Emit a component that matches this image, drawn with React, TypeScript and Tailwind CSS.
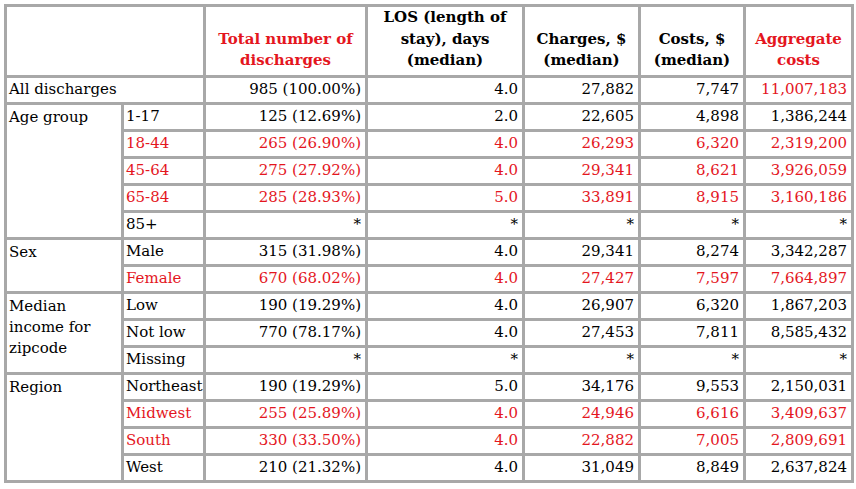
import React from "react";

type Row = { label: string; red: boolean; vals: string[] };

const R = "text-[#e4161e]";

const groups: { name: React.ReactNode; rows: Row[] }[] = [
  {
    name: "Age group",
    rows: [
      { label: "1-17", red: false, vals: ["125 (12.69%)", "2.0", "22,605", "4,898", "1,386,244"] },
      { label: "18-44", red: true, vals: ["265 (26.90%)", "4.0", "26,293", "6,320", "2,319,200"] },
      { label: "45-64", red: true, vals: ["275 (27.92%)", "4.0", "29,341", "8,621", "3,926,059"] },
      { label: "65-84", red: true, vals: ["285 (28.93%)", "5.0", "33,891", "8,915", "3,160,186"] },
      { label: "85+", red: false, vals: ["*", "*", "*", "*", "*"] },
    ],
  },
  {
    name: "Sex",
    rows: [
      { label: "Male", red: false, vals: ["315 (31.98%)", "4.0", "29,341", "8,274", "3,342,287"] },
      { label: "Female", red: true, vals: ["670 (68.02%)", "4.0", "27,427", "7,597", "7,664,897"] },
    ],
  },
  {
    name: (
      <>
        Median
        <br />
        income for
        <br />
        zipcode
      </>
    ),
    rows: [
      { label: "Low", red: false, vals: ["190 (19.29%)", "4.0", "26,907", "6,320", "1,867,203"] },
      { label: "Not low", red: false, vals: ["770 (78.17%)", "4.0", "27,453", "7,811", "8,585,432"] },
      { label: "Missing", red: false, vals: ["*", "*", "*", "*", "*"] },
    ],
  },
  {
    name: "Region",
    rows: [
      { label: "Northeast", red: false, vals: ["190 (19.29%)", "5.0", "34,176", "9,553", "2,150,031"] },
      { label: "Midwest", red: true, vals: ["255 (25.89%)", "4.0", "24,946", "6,616", "3,409,637"] },
      { label: "South", red: true, vals: ["330 (33.50%)", "4.0", "22,882", "7,005", "2,809,691"] },
      { label: "West", red: false, vals: ["210 (21.32%)", "4.0", "31,049", "8,849", "2,637,824"] },
    ],
  },
];

const cell = "border-[3px] border-[#a8a8a8] h-[27px] leading-[21px] py-0 whitespace-nowrap";
const num = `${cell} text-right pr-[4px] pl-[1px]`;
const lab = `${cell} text-left pl-[2px] pr-[1px]`;
const th = "border-[3px] border-[#a8a8a8] align-bottom text-center font-bold leading-[21.5px] pb-[3px] px-[1px] whitespace-nowrap";

export default function App() {
  return (
    <div className="bg-white w-[856px] h-[489px] pt-[4px] pl-[4px]" style={{ fontFamily: '"DejaVu Serif", serif' }}>
      <table className="table-fixed border-collapse text-[15px] text-black w-[847px]">
        <colgroup>
          <col className="w-[117px]" />
          <col className="w-[82px]" />
          <col className="w-[162px]" />
          <col className="w-[157px]" />
          <col className="w-[116px]" />
          <col className="w-[105px]" />
          <col className="w-[108px]" />
        </colgroup>
        <thead>
          <tr className="h-[70px]">
            <th colSpan={2} className={th}></th>
            <th className={`${th} ${R}`}>
              Total number of
              <br />
              discharges
            </th>
            <th className={th}>
              LOS (length of
              <br />
              stay), days
              <br />
              (median)
            </th>
            <th className={th}>
              Charges, $
              <br />
              (median)
            </th>
            <th className={th}>
              Costs, $
              <br />
              (median)
            </th>
            <th className={`${th} ${R}`}>
              Aggregate
              <br />
              costs
            </th>
          </tr>
        </thead>
        <tbody>
          <tr>
            <td colSpan={2} className={lab}>All discharges</td>
            <td className={num}>985 (100.00%)</td>
            <td className={num}>4.0</td>
            <td className={num}>27,882</td>
            <td className={num}>7,747</td>
            <td className={`${num} ${R}`}>11,007,183</td>
          </tr>
          {groups.map((g, gi) =>
            g.rows.map((r, ri) => (
              <tr key={`${gi}-${ri}`}>
                {ri === 0 && (
                  <td rowSpan={g.rows.length} className={`${lab} align-top pt-[2px]`}>
                    {g.name}
                  </td>
                )}
                <td className={`${lab} ${r.red ? R : ""}`}>{r.label}</td>
                {r.vals.map((v, vi) => (
                  <td key={vi} className={`${num} ${r.red ? R : ""}`}>
                    {v}
                  </td>
                ))}
              </tr>
            ))
          )}
        </tbody>
      </table>
    </div>
  );
}
